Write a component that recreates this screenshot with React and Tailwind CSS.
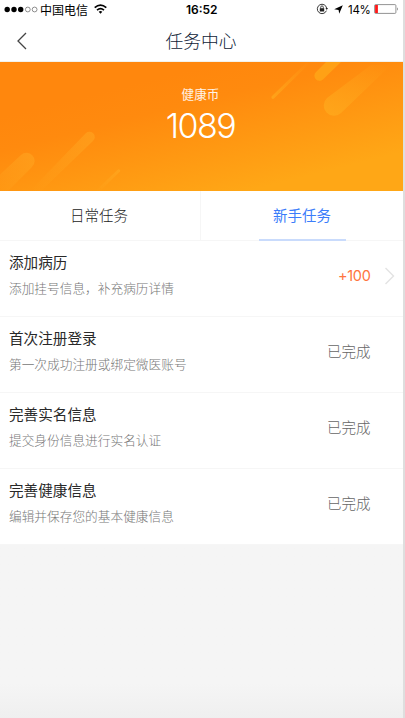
const tasks = [
  { title: '添加病历', detail: '添加挂号信息，补充病历详情', reward: '+100' },
  { title: '首次注册登录', detail: '第一次成功注册或绑定微医账号' },
  { title: '完善实名信息', detail: '提交身份信息进行实名认证' },
  { title: '完善健康信息', detail: '编辑并保存您的基本健康信息' },
];

function StatusBar() {
  return (
    <div className="flex h-[19px] items-center text-[12px] leading-[19px] text-black">
      <svg className="ml-[4px] shrink-0" width="34" height="8" viewBox="0 0 34 8">
        <circle cx="3.2" cy="3.5" r="2.7" />
        <circle cx="10" cy="3.5" r="2.7" />
        <circle cx="16.7" cy="3.5" r="2.7" />
        <circle cx="23.8" cy="3.5" r="2.4" fill="none" stroke="#444" strokeWidth=".6" />
        <circle cx="30.6" cy="3.5" r="2.4" fill="none" stroke="#444" strokeWidth=".6" />
      </svg>
      <span className="ml-[2px] w-[48px] shrink-0 whitespace-nowrap pt-[3px]">中国电信</span>
      <svg className="mb-[2px] ml-[6px] shrink-0" width="13" height="10" viewBox="0 0 13 10" fill="none" stroke="#000" strokeWidth="1.6">
        <path d="M.7 3.7Q6.5-1.6 12.3 3.7M3 6.2Q6.5 3 10 6.2" />
        <path d="M4.7 7.7Q6.5 6.2 8.3 7.7L6.5 9.7Z" fill="#000" stroke="none" />
      </svg>
      <span className="ml-[79px] w-[34px] shrink-0 font-['Inter','Liberation_Sans',sans-serif] text-[12px] font-semibold">16:52</span>
      <svg className="mb-[1px] ml-[96px] shrink-0" width="12" height="12" viewBox="0 0 12 12" fill="none" stroke="#222">
        <path d="M10.4 7.7A4.7 4.7 0 1 1 10.7 5.4" strokeWidth=".9" />
        <path d="M9.5 5.1H12L10.8 6.9Z" fill="#222" stroke="none" />
        <rect x="3.8" y="5.2" width="4.4" height="3.3" fill="#222" stroke="none" />
        <path d="M4.7 5.4V4.2a1.3 1.3 0 0 1 2.6 0V5.4" strokeWidth=".8" />
      </svg>
      <svg className="ml-[6px] shrink-0" width="9" height="9" viewBox="0 0 9 9">
        <path d="M8.8.2 5.2 8.8 4.6 4.9.2 4.3Z" />
      </svg>
      <span className="ml-[5px] w-[24px] shrink-0 whitespace-nowrap pt-[1px] font-['Inter','Liberation_Sans',sans-serif] text-[11.5px] tracking-[-0.3px]">14%</span>
      <svg className="mb-[1px] ml-[2px] shrink-0" width="25" height="10" viewBox="0 0 25 10">
        <rect x=".6" y=".6" width="21.3" height="8.8" rx="1" fill="#fff" stroke="#777" strokeWidth=".8" />
        <path d="M1.1 1h2.8v8H1.1z" fill="#ff1717" />
        <path d="M23 3.2q1.5 1.8 0 3.6z" fill="#555" />
      </svg>
    </div>
  );
}

function Banner() {
  return (
    <div className="relative h-[129px] overflow-hidden">
      <svg className="absolute inset-0" width="403" height="129" viewBox="0 0 403 129">
        <defs>
          <linearGradient id="base" gradientUnits="userSpaceOnUse" x1="180" y1="10" x2="212" y2="138">
            <stop offset="0" stopColor="#ff870d" />
            <stop offset=".25" stopColor="#ff8a0e" />
            <stop offset="1" stopColor="#ffa716" />
          </linearGradient>
          <linearGradient id="down" x1="1" y1="0" x2="0" y2="1">
            <stop offset="0" stopColor="#ffb52c" stopOpacity=".38" />
            <stop offset="1" stopColor="#ffb52c" stopOpacity="0" />
          </linearGradient>
          <linearGradient id="up" x1="0" y1="1" x2="1" y2="0">
            <stop offset="0" stopColor="#ffb020" stopOpacity=".6" />
            <stop offset="1" stopColor="#ffb020" stopOpacity="0" />
          </linearGradient>
        </defs>
        <rect width="403" height="129" fill="url(#base)" />
        <path d="M8 129 32 105A8 8 0 0 0 21 93L-18 129Z" fill="url(#down)" />
        <path d="M41 129 93 79A5 5 0 0 0 86 71L30 129Z" fill="url(#down)" />
        <path d="M100 129 120 109.5A1.5 1.5 0 0 0 118 107.5L95 129Z" fill="url(#down)" />
        <path d="M274 36.5 311 0H307L272 34A1.3 1.3 0 0 0 274 36.5Z" fill="url(#up)" />
        <path d="M323 17.5 341 0H326L316 10A5 5 0 0 0 323 17.5Z" fill="#ffa316" fillOpacity=".9" />
        <path d="M341 51 391 3H371L327 36A10 10 0 0 0 341 51Z" fill="url(#up)" />
      </svg>
      <div className="relative flex flex-col items-center pr-[2px] text-white">
        <div className="mt-[24px] text-[12.6px] leading-[19px] text-white/90">健康币</div>
        <div className="mt-[1px] font-['Inter','Liberation_Sans',sans-serif] text-[34px] font-light leading-[40px] tracking-[-1.5px]">1089</div>
      </div>
    </div>
  );
}

export default function App() {
  return (
    <div className="h-[718px] w-[405px] overflow-hidden border-r-2 border-[#dedede] bg-[#f5f5f5] font-['Liberation_Sans','Noto_Sans_CJK_SC',sans-serif]">
      <header className="h-[62px] bg-white">
        <StatusBar />
        <div className="grid h-[43px] grid-cols-[40px_1fr_40px] items-center border-b border-[#f3f2ea]">
          <svg className="ml-[16px] mt-[1px]" width="12" height="18" viewBox="0 0 12 18" fill="none" stroke="#444" strokeWidth="1.3">
            <path d="M10 1 2 9l8 8" />
          </svg>
          <h1 className="pr-[1px] pt-[3px] text-center text-[17.8px] font-light leading-[26px] text-[#101c38]">任务中心</h1>
        </div>
      </header>
      <Banner />
      <nav className="grid h-[50px] grid-cols-[201px_1fr] border-b border-[#f6f6f6] bg-white text-[14.5px] leading-[50px]">
        <div className="border-r border-[#f6f6f6] pr-[2px] text-center font-light text-[#222]">日常任务</div>
        <div className="flex h-[50px] flex-col items-center text-[#3b7dfa]">
          <span className="h-[48px]">新手任务</span>
          <span className="h-[2px] w-[87px] bg-[#c9dbfc]" />
        </div>
      </nav>
      <main className="bg-white">
        {tasks.map((task) => (
          <section key={task.title} className="flex h-[76px] items-center border-b border-[#f6f6f6] pb-[6px] pl-[9px]">
            <div className="flex-1">
              <h2 className="text-[14.6px] leading-[22px] text-[#292929]">{task.title}</h2>
              <p className="mt-[5px] text-[12.7px] font-light leading-[20px] text-[#777]">{task.detail}</p>
            </div>
            <span className={task.reward ? "text-[14.5px] text-[#ff7540] font-['Inter','Liberation_Sans',sans-serif] tracking-[-0.3px]" : 'pt-[2px] text-[14.5px] font-light text-[#666]'}>
              {task.reward || '已完成'}
            </span>
            <div className="flex w-[32.5px] justify-center pl-[6px]">
              {task.reward && (
                <svg width="12" height="18" viewBox="0 0 12 18" fill="none" stroke="#e3e3e3" strokeWidth="1.4">
                  <path d="m1.5 1 8 8-8 8" />
                </svg>
              )}
            </div>
          </section>
        ))}
      </main>
      <div className="h-[173px] bg-linear-to-b from-[#f5f5f5] from-80% to-[#efefef]" />
    </div>
  );
}
